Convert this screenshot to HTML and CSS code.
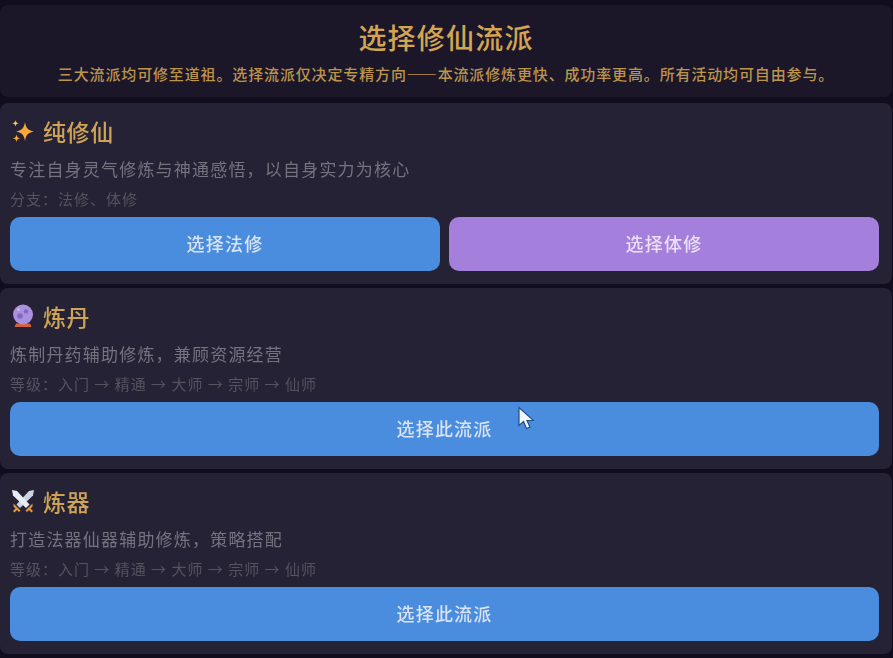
FILE: index.html
```html
<!DOCTYPE html>
<html lang="zh-CN">
<head>
    <meta charset="UTF-8">
    <meta name="viewport" content="width=device-width, initial-scale=1.0">
    <title>选择修仙流派</title>
    <link rel="stylesheet" href="styles.css">
</head>
<body>
    <div class="container">
        <div class="header">
            <h1>选择修仙流派</h1>
            <p>三大流派均可修至道祖。选择流派仅决定专精方向——本流派修炼更快、成功率更高。所有活动均可自由参与。</p>
        </div>

        <div class="card">
            <div class="card-title">
                <svg class="icon" viewBox="0 0 24 24">
                    <path fill="#f9a93a" d="M14 3c1 6 2.600 8 9 9.500-6.400 1.500-8 3.500-9 9.500-1-6-2.600-8-9-9.500 6.400-1.500 8-3.500 9-9.500z"/>
                    <path fill="#f5c26a" d="M4.500 1c.4 2.200 1.100 2.900 3.300 3.300-2.200.4-2.900 1.100-3.300 3.300-.4-2.200-1.100-2.900-3.300-3.300 2.200-.4 2.900-1.100 3.300-3.300z"/>
                    <path fill="#f9a93a" d="M5.500 15.500c.4 2.500 1.300 3.400 3.800 3.800-2.500.4-3.400 1.300-3.800 3.800-.4-2.500-1.300-3.400-3.800-3.800 2.500-.4 3.400-1.300 3.800-3.800z"/>
                </svg>
                <h2>纯修仙</h2>
            </div>
            <p class="desc">专注自身灵气修炼与神通感悟，以自身实力为核心</p>
            <p class="meta">分支：法修、体修</p>
            <div class="button-row">
                <button class="button">选择法修</button>
                <button class="button purple">选择体修</button>
            </div>
        </div>

        <div class="card">
            <div class="card-title">
                <svg class="icon" viewBox="0 0 24 24">
                    <path fill="#d9603a" d="M5 19.500h14l1.500 3.500h-17z"/>
                    <circle cx="12" cy="10.500" r="10" fill="#ab90de"/>
                    <circle cx="9" cy="12" r="2.800" fill="#8468bd"/>
                    <circle cx="15" cy="7.500" r="2.200" fill="#8468bd"/>
                    <circle cx="7.500" cy="5.500" r="1.500" fill="#cdb8ee"/>
                </svg>
                <h2>炼丹</h2>
            </div>
            <p class="desc">炼制丹药辅助修炼，兼顾资源经营</p>
            <p class="meta">等级：入门 → 精通 → 大师 → 宗师 → 仙师</p>
            <div class="button-row">
                <button class="button">选择此流派</button>
            </div>
        </div>

        <div class="card">
            <div class="card-title">
                <svg class="icon" viewBox="0 0 24 24">
                    <path fill="#ccd6e0" d="M23 1l-1 5.500L9 19l-3.500-3.500L18 2z"/>
                    <path fill="#e6ecf2" d="M1 1l1 5.500L15 19l3.500-3.500L6 2z"/>
                    <path fill="#e8983f" d="M2.500 14.500l7 7-1.500 1.500-2-2-2.500 2.500-1.500-1.500 2.500-2.500-2-2z"/>
                    <path fill="#e8983f" d="M21.500 14.500l-7 7 1.500 1.500 2-2 2.500 2.500 1.500-1.500-2.500-2.500 2-2z"/>
                </svg>
                <h2>炼器</h2>
            </div>
            <p class="desc">打造法器仙器辅助修炼，策略搭配</p>
            <p class="meta">等级：入门 → 精通 → 大师 → 宗师 → 仙师</p>
            <div class="button-row">
                <button class="button">选择此流派</button>
            </div>
        </div>
    </div>

    <svg class="cursor" viewBox="0 0 16 24">
        <path fill="#f4f7fb" stroke="#1f4f86" stroke-width="1.200" d="M1 1v18l4.500-4 3 7 3.500-1.500-3-6.500h6.500z"/>
    </svg>
</body>
</html>
```

FILE: styles.css
```css
body {
    margin: 0;
    background-color: #110d1f;
    color: white;
    font-family: "Noto Sans CJK SC", "Liberation Sans", sans-serif;
    overflow: hidden;
}
.container {
    display: flex;
    flex-direction: column;
    gap: 4px;
    padding-top: 5px;
    margin-right: 1px;
    filter: blur(0.4px);
}
.header {
    background-color: #1b1729;
    border-radius: 8px;
    height: 92px;
    margin-bottom: 2px;
    text-align: center;
    box-sizing: border-box;
    padding-top: 13px;
}
.header h1 {
    margin: 0;
    font-size: 28px;
    line-height: 38px;
    font-weight: 500;
    letter-spacing: 1.2px;
    color: #d3a552;
}
.header p {
    margin: 6px 0 0;
    font-size: 15px;
    line-height: 24px;
    font-weight: 500;
    letter-spacing: 0.86px;
    color: #bd944b;
}
.card {
    background-color: #252236;
    border-radius: 8px;
    height: 181px;
    box-sizing: border-box;
    padding: 12px 13px 0 10px;
}
.card-title {
    display: flex;
    align-items: center;
    gap: 8px;
    height: 32px;
}
.icon {
    width: 24px;
    height: 24px;
    margin-left: 1px;
}
.card-title h2 {
    margin: 0;
    font-size: 23px;
    font-weight: 500;
    letter-spacing: 0.6px;
    color: #cfa355;
}
.desc {
    margin: 10px 0 0;
    font-size: 17px;
    line-height: 24px;
    letter-spacing: 1.2px;
    color: #75737f;
}
.meta {
    margin: 8px 0 0;
    font-size: 15px;
    line-height: 20px;
    letter-spacing: 1px;
    color: #55535f;
}
.button-row {
    display: flex;
    gap: 9px;
    margin-top: 8px;
}
.button {
    flex: 1;
    height: 54px;
    background-color: #4a8cdd;
    color: #d8e4f5;
    border: none;
    border-radius: 10px;
    font-family: inherit;
    font-size: 18px;
    font-weight: 500;
    letter-spacing: 1.2px;
    padding-bottom: 4px;
    cursor: pointer;
}
.purple {
    background-color: #a57fdc;
    color: #eadff7;
}
.cursor {
    position: absolute;
    left: 518px;
    top: 406px;
    width: 16px;
    height: 25px;
}
```
